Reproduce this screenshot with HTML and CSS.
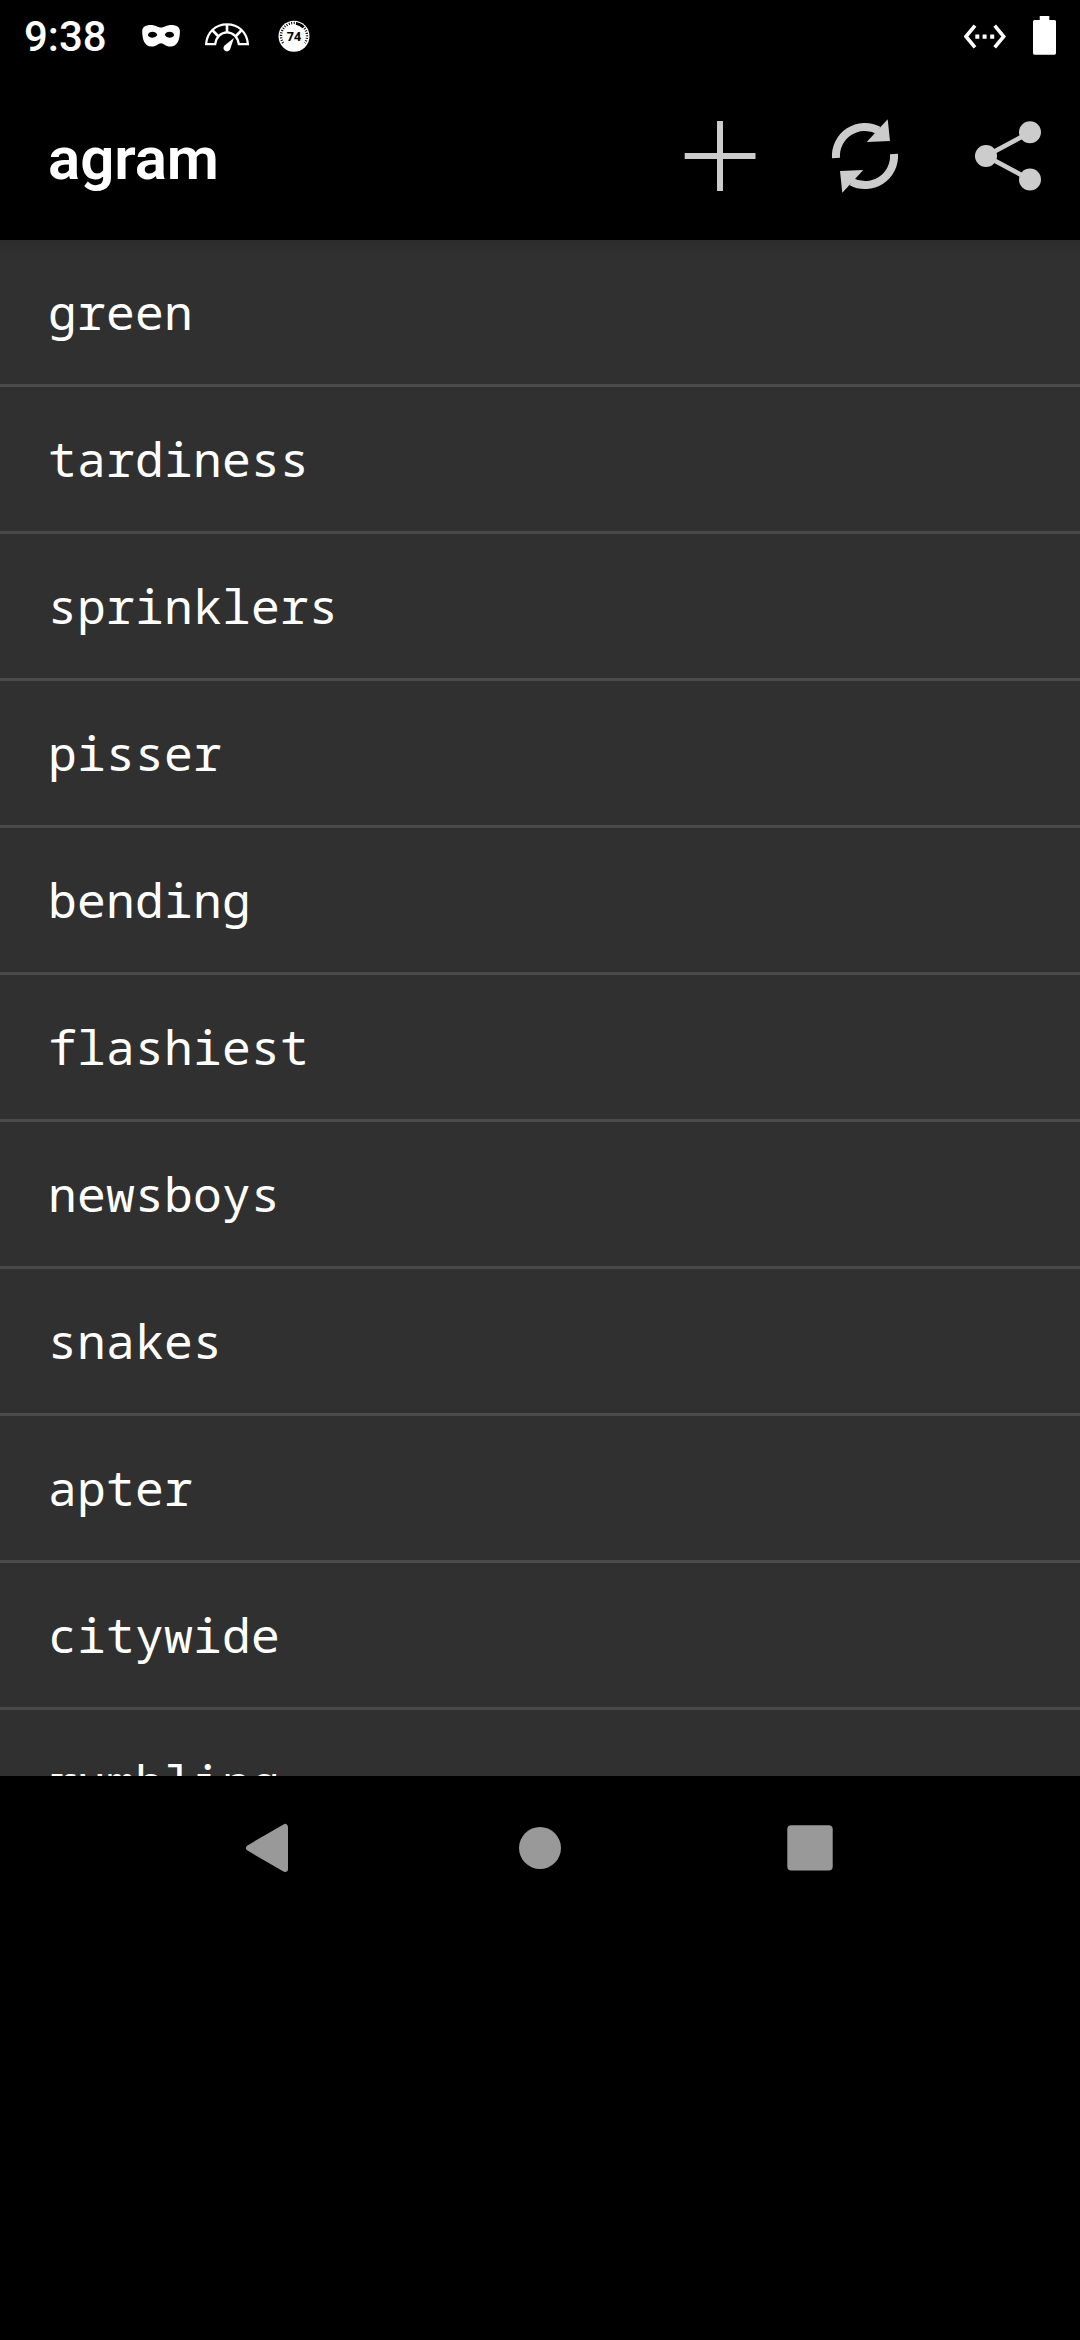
FILE: index.html
```html
<!DOCTYPE html>
<html lang="en">
<head>
<meta charset="utf-8">
<title>agram</title>
<link rel="stylesheet" href="styles.css">
</head>
<body>
<header class="status">
  <span class="clock">9:38</span>
  <div class="notices">
    <svg width="40" height="40" viewBox="141 16 40 40"><path fill="#fff" fill-rule="evenodd" d="M142.200 31C142.200 27 146 25 150.500 25C156 25 157.500 27.500 161 27.500C164.500 27.500 166 25 171.500 25C176 25 179.900 27 179.900 31C180 40 177 46.600 170.500 46.600C165 46.600 164 43.200 161 43.200C158 43.200 157 46.600 151.500 46.600C145 46.600 142.200 40 142.200 31ZM147.800 35Q149 31.800 152.500 31.800Q156 31.800 157.300 35Q155.500 37.800 152.500 37.800Q149 37.800 147.800 35ZM174.200 35Q173 31.800 169.500 31.800Q166 31.800 164.700 35Q166.500 37.800 169.500 37.800Q173 37.800 174.200 35Z"/></svg>
    <svg width="46" height="40" viewBox="204 16 46 40"><g fill="none" stroke="#fff" stroke-width="2.200"><path d="M206.100 44.200C207 32 215.500 24.400 227 24.400S247 32 247.900 44.200H238.800C238 37 233 32.400 227 32.400S216 37 215.200 44.200Z"/><path d="M227 24V33M212.200 30L218.500 36.500M241.800 30L235.500 36.500" stroke-width="2.600"/></g><path fill="#fff" d="M233.900 38L230.400 48.500A3.500 3.500 0 1 1 224.500 45.400Z"/></svg>
    <svg width="34" height="40" viewBox="276.500 16.500 34 40"><circle cx="293.500" cy="36.800" r="15.500" fill="#fff"/><path d="M282.600 43.500A13 13 0 1 1 304.400 43.500" fill="none" stroke="#000" stroke-width="2.400" stroke-dasharray="1 1.500"/><path d="M295.500 23.800A13 13 0 0 1 303 27.800" fill="none" stroke="#000" stroke-width="2.800"/><text x="293.500" y="41.800" text-anchor="middle" class="badge">74</text></svg>
  </div>
  <div class="system">
    <svg width="42" height="40" viewBox="964 16 42 40"><path fill="none" stroke="#fff" stroke-width="3.600" d="M975 25.700L966 36.500L975 47.300M994.700 25.700L1003.700 36.500L994.700 47.300"/><path fill="#fff" d="M975.300 34.500h4v4.300h-4zM982.600 34.500h4v4.300h-4zM990.200 34.500h4v4.300h-4z"/></svg>
    <svg width="23" height="40" viewBox="1033 16 23 40"><path fill="#fff" d="M1039.700 16H1049.300V20H1054.500Q1056 20 1056 21.500V53Q1056 54.700 1054.500 54.700H1034.500Q1033 54.700 1033 53V21.500Q1033 20 1034.500 20H1039.700Z"/></svg>
  </div>
</header>
<div class="toolbar">
  <h1 class="title">agram</h1>
  <div class="actions">
    <svg width="72" height="80" viewBox="684 116 72 80"><path fill="#ccc" d="M717 121h6v32h32.500v6H723v32h-6v-32h-32.300v-6H717z"/></svg>
    <svg width="72" height="80" viewBox="829 116 72 80"><g id="turn"><path d="M836 158A29 29 0 0 1 878.500 130.300" fill="none" stroke="#ccc" stroke-width="8"/><path fill="#ccc" d="M887.700 119.300L890 141L866.700 142Z"/></g><use href="#turn" transform="rotate(180 865 156)"/></svg>
    <svg width="68" height="80" viewBox="974 116 68 80"><path d="M1030 132.400L986 156L1030 179.600" fill="none" stroke="#ccc" stroke-width="4.700"/><g fill="#ccc"><circle cx="986" cy="156" r="11"/><circle cx="1030" cy="132.300" r="11"/><circle cx="1030" cy="179.500" r="11"/></g></svg>
  </div>
</div>
<ul class="words">
  <li>green</li>
  <li>tardiness</li>
  <li>sprinklers</li>
  <li>pisser</li>
  <li>bending</li>
  <li>flashiest</li>
  <li>newsboys</li>
  <li>snakes</li>
  <li>apter</li>
  <li>citywide</li>
  <li>rumbling</li>
</ul>
<nav class="nav">
  <svg width="60" height="60" viewBox="240 1818 60 60"><path fill="#999" stroke="#999" stroke-width="6" stroke-linejoin="round" d="M249 1848L285 1827V1869Z"/></svg>
  <svg width="60" height="60" viewBox="510 1818 60 60"><circle cx="540" cy="1848" r="21" fill="#999"/></svg>
  <svg width="60" height="60" viewBox="780 1818 60 60"><rect x="787.300" y="1825.200" width="45.400" height="45.400" rx="4" fill="#999"/></svg>
</nav>
</body>
</html>
```
FILE: styles.css
```css
* { box-sizing: border-box; }
body {
  margin: 0;
  min-height: 2340px;
  background: #000;
  color: #fff;
  font-family: Roboto, sans-serif;
}
svg { display: block; flex: none; }
.status {
  display: flex;
  align-items: center;
  height: 72px;
  padding: 0 24px;
}
.clock {
  width: 117px;
  font-size: 42px;
  font-weight: 500;
  line-height: 72px;
  padding-top: 2px;
}
.notices { display: flex; gap: 23px; }
.notices svg:last-child { margin-left: 4px; }
.badge { font: 700 12.5px "Open Sans", sans-serif; }
.system { display: flex; gap: 27px; margin-left: auto; }
.toolbar {
  display: flex;
  align-items: center;
  justify-content: space-between;
  height: 168px;
  padding: 0 38px 0 48px;
}
.title {
  margin: 0;
  padding-top: 4px;
  font-size: 60px;
  font-weight: 600;
  letter-spacing: -.1px;
}
.actions { display: flex; gap: 73px; }
.words {
  height: 1536px;
  margin: 0;
  padding: 0;
  overflow: hidden;
  list-style: none;
  background: linear-gradient(#2c2c2c, #303030 14px);
  font-family: "Droid Sans Mono", "Noto Sans Mono", "DejaVu Sans Mono", monospace;
  font-size: 48px;
  font-weight: 450;
  letter-spacing: .2px;
}
.words li {
  height: 147px;
  padding-left: 48px;
  line-height: 144px;
  border-bottom: 3px solid #4a4a4a;
}
.nav {
  display: flex;
  justify-content: space-between;
  align-items: center;
  height: 144px;
  padding: 0 240px;
}
```
